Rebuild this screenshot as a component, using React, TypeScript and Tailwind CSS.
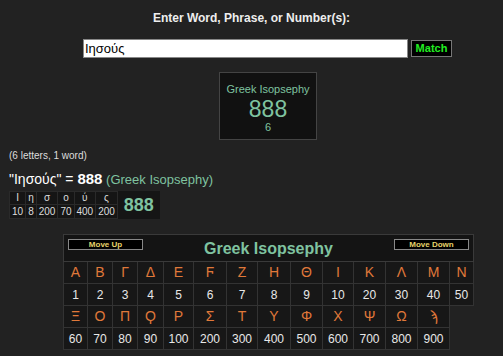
import React from "react";

const F = { fontFamily: '"Liberation Sans", Arial, sans-serif' };

const widths = [24, 25, 25, 26, 30, 33, 31, 33, 32, 31, 32, 32, 32, 24];
const row1L = ["Α", "Β", "Γ", "Δ", "Ε", "Ϝ", "Ζ", "Η", "Θ", "Ι", "Κ", "Λ", "Μ", "Ν"];
const row1N = ["1", "2", "3", "4", "5", "6", "7", "8", "9", "10", "20", "30", "40", "50"];
const row2L = ["Ξ", "Ο", "Π", "Ϙ", "Ρ", "Σ", "Τ", "Υ", "Φ", "Χ", "Ψ", "Ω", "ϡ"];
const row2N = ["60", "70", "80", "90", "100", "200", "300", "400", "500", "600", "700", "800", "900"];

const word = [
  ["Ι", "10"],
  ["η", "8"],
  ["σ", "200"],
  ["ο", "70"],
  ["ύ", "400"],
  ["ς", "200"],
];

export default function App() {
  return (
    <div className="w-[503px] h-[356px] bg-[#222222] overflow-hidden relative" style={F}>
      <div className="pt-[11px] text-center text-[12px] font-bold text-[#eeeeee] leading-[14px]">
        Enter Word, Phrase, or Number(s):
      </div>
      <div className="flex justify-start pl-[83px] mt-[14px] gap-[3px] items-center">
        <div className="w-[325px] h-[19px] bg-white border border-[#888] flex items-center pl-[1px] text-[13px] text-black leading-none">
          Ιησούς
        </div>
        <div className="w-[41px] h-[17px] bg-black border border-[#777] flex items-center justify-center text-[11px] font-bold text-[#22ee22] leading-none">
          Match
        </div>
      </div>
      <div className="flex justify-center mt-[14px] pl-[33px]">
        <div className="w-[98px] h-[68px] bg-[#111111] border border-[#444] flex flex-col items-center pt-[10px]">
          <div className="text-[11px] leading-[12px] text-[#7fc3a0]">Greek Isopsephy</div>
          <div className="text-[23px] leading-[24px] text-[#7fc3a0] mt-[2px]">888</div>
          <div className="text-[11px] leading-[12px] text-[#7fc3a0]">6</div>
        </div>
      </div>
      <div className="pl-[9px] mt-[10px] text-[10px] leading-[12px] text-[#dddddd]">(6 letters, 1 word)</div>
      <div className="pl-[9px] mt-[8px] flex items-baseline leading-[18px] whitespace-pre">
        <span className="text-[14px] text-white">"Ιησούς" = </span>
        <span className="text-[15px] font-bold text-white">888</span>
        <span className="text-[13px] text-[#7fc3a0]"> (Greek Isopsephy)</span>
      </div>
      <div className="ml-[9px] mt-[2px] flex w-fit bg-[#151515]">
        <table className="border-collapse text-[10px] text-[#dddddd] leading-[12px]">
          <tbody>
            <tr>
              {word.map(([l], i) => (
                <td key={i} className="border border-[#2a2a2a] px-[2px] text-center h-[13px]">{l}</td>
              ))}
            </tr>
            <tr>
              {word.map(([, v], i) => (
                <td key={i} className="border border-[#2a2a2a] px-[2px] text-center h-[14px]">{v}</td>
              ))}
            </tr>
          </tbody>
        </table>
        <div className="w-[42px] flex items-center justify-center text-[18px] font-bold text-[#7fc3a0]">888</div>
      </div>
      <div className="ml-[63px] mt-[15px]">
        <table className="border-collapse" style={{ tableLayout: "fixed" }}>
          <colgroup>
            {widths.map((w, i) => (
              <col key={i} style={{ width: w }} />
            ))}
          </colgroup>
          <tbody>
            <tr>
              <td colSpan={14} className="border border-[#3a3a3a] bg-[#141414] h-[26px] p-0">
                <div className="flex items-center justify-between px-[4px] relative h-[26px]">
                  <div className="w-[75px] h-[11px] bg-black border border-[#888] flex items-center justify-center text-[8px] font-bold text-[#e6d36a] leading-none -mt-[7px]">
                    Move Up
                  </div>
                  <div className="absolute inset-0 flex items-center justify-center text-[16px] font-bold text-[#7fc3a0] pt-[1px]">
                    Greek Isopsephy
                  </div>
                  <div className="w-[75px] h-[11px] bg-black border border-[#888] flex items-center justify-center text-[8px] font-bold text-[#e6d36a] leading-none -mt-[7px] relative">
                    Move Down
                  </div>
                </div>
              </td>
            </tr>
            <tr>
              {row1L.map((l, i) => (
                <td key={i} className="border border-[#333] bg-[#171717] h-[22px] p-0 text-center text-[14px] text-[#e0793a]">{l}</td>
              ))}
            </tr>
            <tr>
              {row1N.map((l, i) => (
                <td key={i} className="border border-[#333] bg-[#171717] h-[22px] p-0 text-center text-[12px] text-[#e8e8e8]">{l}</td>
              ))}
            </tr>
            <tr>
              {row2L.map((l, i) => (
                <td key={i} className="border border-[#333] bg-[#171717] h-[22px] p-0 text-center text-[14px] text-[#e0793a]">{l}</td>
              ))}
            </tr>
            <tr>
              {row2N.map((l, i) => (
                <td key={i} className="border border-[#333] bg-[#171717] h-[22px] p-0 text-center text-[12px] text-[#e8e8e8]">{l}</td>
              ))}
            </tr>
          </tbody>
        </table>
      </div>
    </div>
  );
}
